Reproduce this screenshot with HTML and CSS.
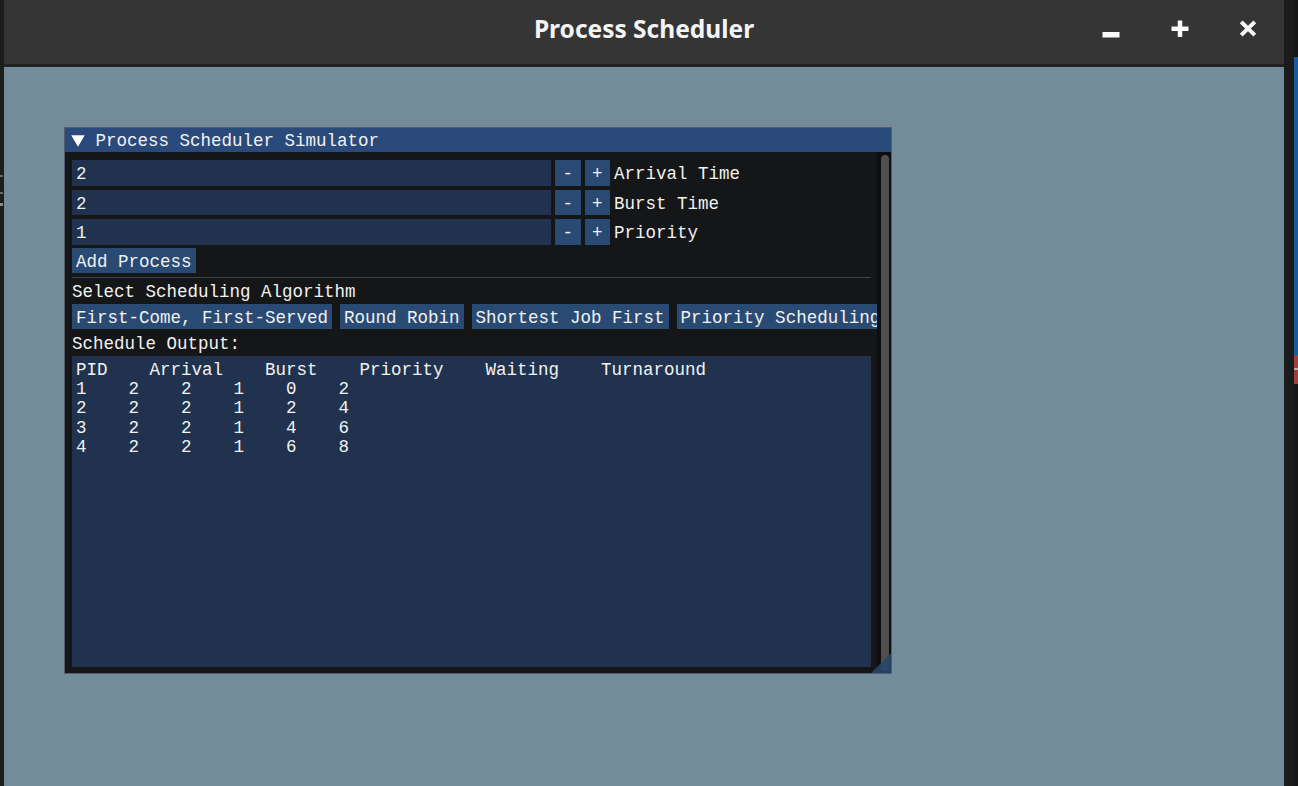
FILE: index.html
```html
<!DOCTYPE html>
<html lang="en">
<head>
<meta charset="utf-8">
<title>Process Scheduler</title>
<link rel="stylesheet" href="styles.css">
</head>
<body>
<div class="screen">
  <div class="edge-left">
    <span class="tick tick-1"></span>
    <span class="tick tick-2"></span>
    <span class="tick tick-3"></span>
  </div>
  <div class="app">
    <header class="titlebar">
      <div class="title">Process Scheduler</div>
      <div class="controls">
        <div class="ctl">
          <svg width="18" height="18" viewBox="0 0 18 18"><rect x="0.5" y="12" width="17" height="5.5" fill="#fafafa"/></svg>
        </div>
        <div class="ctl">
          <svg width="18" height="18" viewBox="0 0 18 18"><rect x="6.75" y="0.5" width="4.5" height="16.5" fill="#fafafa"/><rect x="0.5" y="6.5" width="17" height="4.5" fill="#fafafa"/></svg>
        </div>
        <div class="ctl">
          <svg width="18" height="18" viewBox="0 0 18 18"><path d="M2.2 1.8 L15.8 15.2 M15.8 1.8 L2.2 15.2" stroke="#fafafa" stroke-width="4" fill="none"/></svg>
        </div>
      </div>
    </header>
    <main class="desktop">
      <section class="imwin">
        <div class="imtitle">
          <svg class="arrow" width="14" height="12" viewBox="0 0 14 12"><polygon points="0.25,0.3 13.75,0.3 7,11.7" fill="#ffffff"/></svg>
          <span class="imtitle-text">Process Scheduler Simulator</span>
        </div>
        <div class="imbody">
          <div class="content">
            <div class="row">
              <div class="input frame">2</div>
              <div class="btn sq frame">-</div>
              <div class="btn sq frame">+</div>
              <span class="label frame">Arrival Time</span>
            </div>
            <div class="row">
              <div class="input frame">2</div>
              <div class="btn sq frame">-</div>
              <div class="btn sq frame">+</div>
              <span class="label frame">Burst Time</span>
            </div>
            <div class="row">
              <div class="input frame">1</div>
              <div class="btn sq frame">-</div>
              <div class="btn sq frame">+</div>
              <span class="label frame">Priority</span>
            </div>
            <div class="add-row"><div class="btn txt frame">Add Process</div></div>
            <div class="sep"></div>
            <div class="text text-select">Select Scheduling Algorithm</div>
            <div class="algos">
              <div class="btn txt frame">First-Come, First-Served</div>
              <div class="btn txt frame">Round Robin</div>
              <div class="btn txt frame">Shortest Job First</div>
              <div class="btn txt frame">Priority Scheduling</div>
            </div>
            <div class="text text-output">Schedule Output:</div>
            <pre class="output">PID    Arrival    Burst    Priority    Waiting    Turnaround
1    2    2    1    0    2
2    2    2    1    2    4
3    2    2    1    4    6
4    2    2    1    6    8</pre>
          </div>
          <div class="scrollbar"><div class="grab"></div></div>
        </div>
        <div class="grip"></div>
      </section>
    </main>
  </div>
  <div class="edge-right">
    <div class="er-a"></div>
    <div class="er-b">
      <div class="er-top"></div>
      <div class="er-blue"></div>
      <div class="er-red"><div class="er-line"></div></div>
      <div class="er-rest"></div>
    </div>
  </div>
</div>
</body>
</html>
```

FILE: styles.css
```css
* { box-sizing: border-box; }

html, body {
  margin: 0;
  padding: 0;
}

body {
  width: 1298px;
  height: 786px;
  overflow: hidden;
  background: #1c1c1c;
}

.screen {
  display: flex;
  width: 1298px;
  height: 786px;
}

/* left dark edge */
.edge-left {
  width: 4px;
  background: #1d1d1d;
  display: flex;
  flex-direction: column;
}
.tick {
  display: block;
  width: 3px;
  height: 2px;
  background: #6a6a6a;
}
.tick-1 { margin-top: 175px; }
.tick-2 { margin-top: 15px; }
.tick-3 { margin-top: 9px; height: 3px; background: #8a8a8a; }

/* app window */
.app {
  width: 1280px;
  display: flex;
  flex-direction: column;
}

.titlebar {
  height: 67px;
  background: #353535;
  border-bottom: 3px solid #222222;
  display: grid;
  grid-template-columns: 1fr auto 1fr;
}

.title {
  grid-column: 2;
  font-family: "Noto Sans", "Open Sans", sans-serif;
  font-weight: 700;
  font-size: 24.5px;
  line-height: 34px;
  padding-top: 12px;
  color: #f4f4f4;
  white-space: nowrap;
}

.controls {
  grid-column: 3;
  justify-self: end;
  display: flex;
  gap: 28.5px;
  padding-right: 16px;
}

.ctl {
  width: 40px;
  height: 64px;
  display: flex;
  justify-content: center;
  align-items: flex-start;
  padding-top: 19.7px;
}
.ctl svg { display: block; }

/* desktop / imgui clear colour */
.desktop {
  flex: 1;
  background: #738c99;
  padding: 60px 0 0 60px;
}

/* imgui window */
.imwin {
  position: relative;
  width: 828px;
  height: 547px;
  border: 1px solid #565c68;
  background: #151617;
  display: flex;
  flex-direction: column;
  font-family: "Liberation Mono", "DejaVu Sans Mono", monospace;
  font-size: 17.5px;
  color: #f2f2f2;
}

.imtitle {
  height: 24px;
  flex: none;
  background: #294a7a;
  display: flex;
  align-items: flex-start;
  padding-left: 6px;
}
.arrow {
  display: block;
  margin-top: 6.5px;
  flex: none;
}
.imtitle-text {
  margin-left: 10.4px;
  padding-top: 4px;
  line-height: 19.5px;
  white-space: pre;
}

.imbody {
  flex: 1;
  display: flex;
  min-height: 0;
}

.content {
  flex: 1;
  min-width: 0;
  overflow: hidden;
  padding: 8px 0 0 7px;
  display: flex;
  flex-direction: column;
}

.frame {
  height: 25.5px;
  padding-top: 3px;
  line-height: 22.5px;
  white-space: pre;
  flex: none;
}

.row {
  display: flex;
  gap: 4px;
  margin-bottom: 4px;
}

.input {
  width: 479px;
  background: #20324d;
  padding-left: 4px;
}

.btn {
  background: #284a73;
}
.sq {
  width: 25.5px;
  text-align: center;
}
.txt {
  height: 25px;
  line-height: 22px;
  padding-left: 4px;
  padding-right: 4px;
}

.label {
  padding-left: 0;
}

.add-row {
  display: flex;
  margin-top: -0.5px;
}

.sep {
  width: 799px;
  height: 1px;
  background: #3f4148;
  margin-top: 3.5px;
  flex: none;
}

.text {
  line-height: 19.5px;
  white-space: pre;
  flex: none;
}
.text-select {
  margin-top: 3.5px;
  padding-top: 2px;
  height: 19.5px;
  box-sizing: content-box;
}
.text-output {
  margin-top: 5px;
  padding-top: 1px;
  height: 19.5px;
  box-sizing: content-box;
}

.algos {
  display: flex;
  gap: 8px;
  margin-top: 1.5px;
  flex: none;
}
.algos .btn { flex: none; }

.output {
  margin: 1.5px 0 0 0;
  width: 799px;
  height: 311px;
  flex: none;
  background: #20324d;
  padding: 4.5px 4px 0 4px;
  font-family: inherit;
  font-size: inherit;
  line-height: 19.4px;
  color: inherit;
  white-space: pre;
  overflow: hidden;
}

.scrollbar {
  width: 14px;
  flex: none;
  background: #0e0e0f;
  display: flex;
  padding: 3px 2px 2px 4px;
}
.grab {
  flex: 1;
  background: #4f4f4f;
  border-radius: 5px;
}

.grip {
  position: absolute;
  right: 0;
  bottom: 0;
  width: 20px;
  height: 20px;
  background: #28466c;
  clip-path: polygon(100% 0, 100% 100%, 0 100%);
  opacity: 0.9;
}

/* right edge (neighbouring window) */
.edge-right {
  width: 14px;
  display: flex;
}
.er-a {
  width: 10px;
  background: #1b1b1b;
}
.er-b {
  width: 4px;
  display: flex;
  flex-direction: column;
}
.er-top { height: 57px; background: #161616; }
.er-blue { height: 298px; background: #1b5b9b; }
.er-red {
  height: 29px;
  background: #9e3f40;
  display: flex;
  flex-direction: column;
  padding-top: 13px;
}
.er-line { height: 2px; background: #c9a6a6; }
.er-rest { flex: 1; background: #161616; }
```
